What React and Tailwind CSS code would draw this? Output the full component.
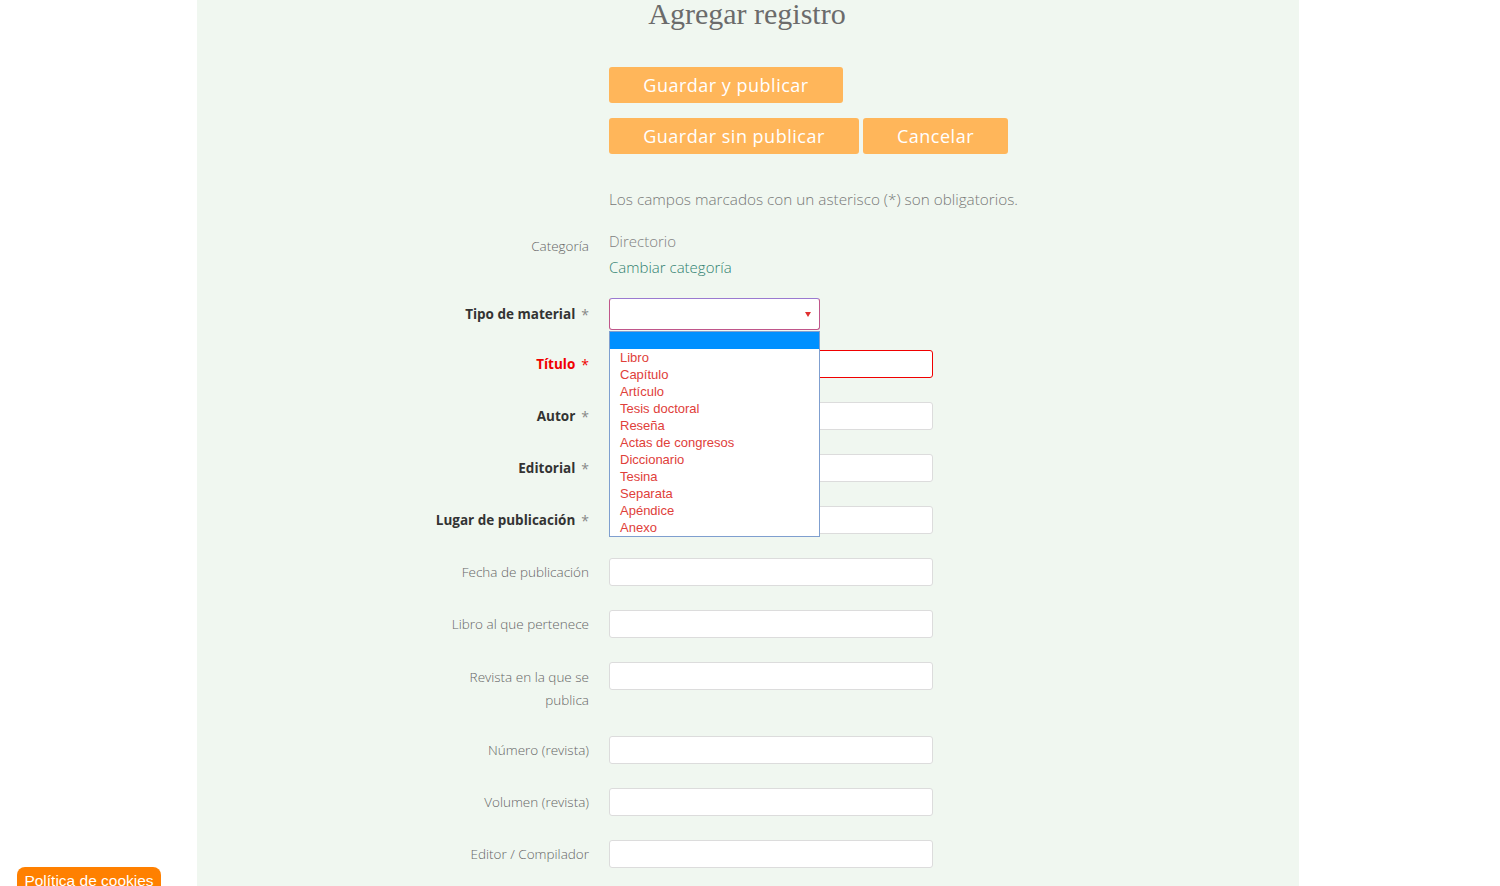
import React from "react";

const opciones = [
  "Libro",
  "Capítulo",
  "Artículo",
  "Tesis doctoral",
  "Reseña",
  "Actas de congresos",
  "Diccionario",
  "Tesina",
  "Separata",
  "Apéndice",
  "Anexo",
];

function Label({ children, required, error }) {
  if (required) {
    return (
      <div
        className={`flex justify-end items-center gap-[6px] text-[13.5px] font-bold ${
          error ? "text-[#f00000]" : "text-[#333]"
        }`}
      >
        <span>{children}</span>
        <span className={`font-normal text-[14px] ${error ? "text-[#f00000]" : "text-[#888]"}`}>*</span>
      </div>
    );
  }
  return <div className="text-right text-[13.5px] text-[#666] font-light leading-[23px]">{children}</div>;
}

function Row({ label, children, tall }) {
  return (
    <div className="grid grid-cols-[392px_1fr] gap-x-[20px] items-start">
      <div className={tall ? "pt-[4px]" : "h-[28px] flex items-center justify-end"}>
        {label}
      </div>
      <div>{children}</div>
    </div>
  );
}

function Input({ error }) {
  return (
    <div
      className={`w-[324px] h-[28px] bg-white rounded-[3px] border ${
        error ? "border-[#f00000]" : "border-[#dcdcdc]"
      }`}
    />
  );
}

export default function App() {
  return (
    <div className="min-h-[886px] bg-white relative overflow-hidden" style={{ fontFamily: '"Open Sans", sans-serif' }}>
      <div className="ml-[197px] w-[1102px] min-h-[886px] bg-[#f0f7f0] pb-10">
        {/* Heading */}
        <h1
          className="text-center text-[30px] leading-[32px] text-[#6b6b6b] pr-[2px] mt-[-2px]"
          style={{ fontFamily: '"Liberation Serif", "DejaVu Serif", serif' }}
        >
          Agregar registro
        </h1>

        <div className="pl-[412px]">
          {/* Buttons */}
          <div className="mt-[37px] flex flex-col gap-[15px]">
            <div>
              <button className="w-[234px] h-[36px] bg-[#ffb65a] text-white text-[18px] tracking-[0.5px] rounded-[3px]">
                Guardar y publicar
              </button>
            </div>
            <div className="flex gap-[4px]">
              <button className="w-[250px] h-[36px] bg-[#ffb65a] text-white text-[18px] tracking-[0.5px] rounded-[3px]">
                Guardar sin publicar
              </button>
              <button className="w-[145px] h-[36px] bg-[#ffb65a] text-white text-[18px] tracking-[0.5px] rounded-[3px]">
                Cancelar
              </button>
            </div>
          </div>

          <p className="mt-[35px] text-[15.3px] leading-[20px] text-[#777] font-light">
            Los campos marcados con un asterisco (*) son obligatorios.
          </p>
        </div>

        {/* Categoría */}
        <div className="mt-[19px] grid grid-cols-[392px_1fr] gap-x-[20px]">
          <div className="pt-[8px] text-right text-[13.5px] text-[#666] font-light">Categoría</div>
          <div className="text-[15px] leading-[26px] font-light">
            <div className="text-[#808080]">Directorio</div>
            <div className="text-[#2f7f6f]">Cambiar categoría</div>
          </div>
        </div>

        {/* Tipo de material */}
        <div className="mt-[18px] grid grid-cols-[392px_1fr] gap-x-[20px]">
          <div className="h-[32px] flex items-center justify-end">
            <Label required>Tipo de material</Label>
          </div>
          <div className="relative">
            <div className="w-[211px] h-[32px] bg-white rounded-[3px] border border-[#c0568a] border-t-[#9a7ad0] flex items-center justify-end pr-[8px]">
              <svg width="6" height="5" viewBox="0 0 6 5">
                <path d="M0 0 L6 0 L3 5 Z" fill="#e03030" />
              </svg>
            </div>
            <div
              className="absolute left-0 top-[33px] w-[211px] bg-white border border-[#7f9fcf] z-10"
              style={{ fontFamily: '"Liberation Sans", Arial, sans-serif' }}
            >
              <div className="h-[17px] bg-[#0090ff]" />
              {opciones.map((o) => (
                <div key={o} className="pl-[10px] h-[17px] leading-[17px] text-[13px] text-[#e0403a]">
                  {o}
                </div>
              ))}
            </div>
          </div>
        </div>

        {/* Fields */}
        <div className="mt-[20px] flex flex-col gap-[24px]">
          <Row label={<Label required error>Título</Label>}>
            <Input error />
          </Row>
          <Row label={<Label required>Autor</Label>}>
            <Input />
          </Row>
          <Row label={<Label required>Editorial</Label>}>
            <Input />
          </Row>
          <Row label={<Label required>Lugar de publicación</Label>}>
            <Input />
          </Row>
          <Row label={<Label>Fecha de publicación</Label>}>
            <Input />
          </Row>
          <Row label={<Label>Libro al que pertenece</Label>}>
            <Input />
          </Row>
          <Row
            tall
            label={
              <Label>
                Revista en la que se
                <br />
                publica
              </Label>
            }
          >
            <Input />
          </Row>
          <Row label={<Label>Número (revista)</Label>}>
            <Input />
          </Row>
          <Row label={<Label>Volumen (revista)</Label>}>
            <Input />
          </Row>
          <Row label={<Label>Editor / Compilador</Label>}>
            <Input />
          </Row>
        </div>
      </div>

      {/* Cookies */}
      <div
        className="absolute left-[17px] top-[867px] w-[144px] h-[30px] bg-[#ff8000] rounded-t-[8px] text-white text-[15.5px] text-center pt-[2px]"
        style={{ fontFamily: '"Liberation Sans", Arial, sans-serif' }}
      >
        Política de cookies
      </div>
    </div>
  );
}
